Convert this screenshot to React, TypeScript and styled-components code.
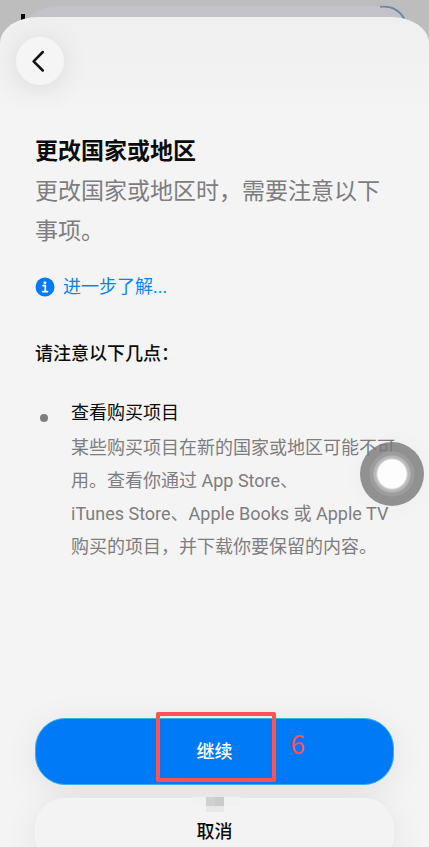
import React from "react";
import styled, { createGlobalStyle } from "styled-components";

const GlobalStyle = createGlobalStyle`
  *, *::before, *::after { box-sizing: border-box; }
  body {
    margin: 0;
    background: #bdbdbd;
    font-family: Roboto, "Noto Sans CJK SC", sans-serif;
  }
  h1, h2, h3, p, ul { margin: 0; padding: 0; }
  button { border: 0; padding: 0; font: inherit; cursor: pointer; }
`;

const Screen = styled.div`
  position: relative;
  display: flex;
  flex-direction: column;
  height: 100vh;
  overflow: hidden;
  padding-top: 17px;
`;

const Backdrop = styled.div`
  position: absolute;
  top: 6px;
  left: 20px;
  right: 20px;
  height: 60px;
  border-radius: 36px 30px 0 0;
  background: #c3c2c8;
`;

const BackdropText = styled.span`
  position: absolute;
  top: 14px;
  left: 21px;
  width: 4px;
  height: 8px;
  background: #000;
`;

const BackdropArc = styled.svg`
  position: absolute;
  top: 5px;
  right: 22px;
`;

const Sheet = styled.main`
  position: relative;
  flex: 1;
  display: flex;
  flex-direction: column;
  border-radius: 38px 38px 0 0 / 26px 26px 0 0;
  background: linear-gradient(#efefef, #f4f4f4 100px);
`;

const BackButton = styled.button`
  display: grid;
  place-items: center;
  width: 48px;
  height: 48px;
  margin: 20px 0 0 16px;
  border-radius: 50%;
  background: #f5f5f5;
  color: #111;
  box-shadow: 0 4px 28px rgba(0, 0, 0, 0.1);
`;

const Content = styled.div`
  padding: 47px 32px 0 35px;
`;

const Title = styled.h1`
  font-size: 23px;
  line-height: 40px;
  font-weight: 700;
  color: #0c0c0c;
`;

const Lead = styled.p`
  font-size: 23px;
  line-height: 40px;
  color: #7d7d7f;
`;

const LearnMore = styled.a`
  display: inline-flex;
  align-items: center;
  gap: 8px;
  margin-top: 17px;
  font-size: 18px;
  line-height: 36px;
  color: #0a84e6;
  text-decoration: none;
`;

const SectionTitle = styled.h2`
  margin-top: 31px;
  font-size: 18px;
  line-height: 36px;
  font-weight: 500;
  color: #0c0c0c;
`;

const NoteList = styled.ul`
  margin-top: 24px;
  list-style: none;
`;

const Note = styled.li`
  display: flex;
  gap: 23px;

  &::before {
    content: "";
    flex: none;
    width: 8px;
    height: 8px;
    margin: 18px 0 0 5px;
    border-radius: 50%;
    background: #7d7d7f;
  }
`;

const NoteTitle = styled.h3`
  font-size: 18px;
  line-height: 33px;
  font-weight: 400;
  color: #0c0c0c;
`;

const NoteText = styled.p`
  margin-top: 2px;
  font-size: 18px;
  line-height: 33px;
  color: #7d7d7f;
`;

const Actions = styled.div`
  display: flex;
  flex-direction: column;
  gap: 13px;
  margin: auto 35px -18px;
`;

const ActionButton = styled.button<{ $primary?: boolean }>`
  position: relative;
  height: 67px;
  border-radius: 30px;
  font-size: 18px;
  line-height: 24px;
  font-weight: 500;
  color: ${(p) => (p.$primary ? "#fff" : "#0c0c0c")};
  background: ${(p) => (p.$primary ? "#007af7" : "#f3f3f3")};
  border: 1px solid ${(p) => (p.$primary ? "#35b2e6" : "#f5f5f5")};
  box-shadow: 0 6px 34px rgba(0, 0, 0, 0.08);
`;

const Highlight = styled.span`
  position: absolute;
  top: -7px;
  left: 50%;
  width: 120px;
  height: 70px;
  margin-left: -59px;
  border: 4px solid #ff5353;
  border-radius: 2px;
`;

const StepNumber = styled.span`
  position: absolute;
  top: 7px;
  left: 50%;
  margin-left: 76px;
  font-family: "Noto Sans CJK SC", sans-serif;
  font-size: 26px;
  line-height: 34px;
  font-weight: 400;
  color: #ff4f58;
`;

const Mosaic = styled.svg`
  position: absolute;
  top: -2px;
  left: 50%;
  margin-left: -22px;
`;

const TouchButton = styled.button`
  position: absolute;
  top: 442px;
  right: 5px;
  width: 64px;
  height: 64px;
  border-radius: 50%;
  background: radial-gradient(
    circle,
    #fdfdfd 14px,
    #bcbcbc 16px,
    #b6b6b6 18px,
    #9e9e9e 19px,
    #9c9c9c 22px,
    rgba(120, 120, 120, 0.8) 23px
  );
  box-shadow: 0 0 24px rgba(0, 0, 0, 0.03);
`;

const ChevronIcon = () => (
  <svg width="24" height="24" viewBox="0 0 24 24" fill="none" aria-hidden="true">
    <path
      d="M14.800 3 5.600 12.300l9.200 9.200"
      stroke="currentColor"
      strokeWidth="2.5"
      strokeLinecap="round"
      strokeLinejoin="round"
    />
  </svg>
);

const InfoIcon = () => (
  <svg width="20" height="20" viewBox="0 0 20 20" aria-hidden="true">
    <circle cx="10" cy="10" r="9.5" fill="#007af7" />
    <circle cx="9.900" cy="5.8" r="1.5" fill="#fff" />
    <path
      d="M8 8.700h2.300v5.700M7.700 14.600h4.900"
      fill="none"
      stroke="#fff"
      strokeWidth="1.700"
      strokeLinecap="round"
      strokeLinejoin="round"
    />
  </svg>
);

export default function App() {
  return (
    <>
      <GlobalStyle />
      <Screen>
        <Backdrop />
        <BackdropText />
        <BackdropArc width="28" height="16" viewBox="0 0 28 16" fill="none" aria-hidden="true">
          <path d="M1 1.8C12 .5 20 4 25.5 14" stroke="#7186a6" strokeWidth="1.8" />
        </BackdropArc>
        <Sheet>
          <BackButton type="button" aria-label="返回">
            <ChevronIcon />
          </BackButton>
          <Content>
            <Title>更改国家或地区</Title>
            <Lead>更改国家或地区时，需要注意以下事项。</Lead>
            <LearnMore href="#">
              <InfoIcon />
              进一步了解...
            </LearnMore>
            <SectionTitle>请注意以下几点：</SectionTitle>
            <NoteList>
              <Note>
                <div>
                  <NoteTitle>查看购买项目</NoteTitle>
                  <NoteText>
                    某些购买项目在新的国家或地区可能不可用。查看你通过 App Store、iTunes&nbsp;Store、Apple
                    Books 或 Apple TV 购买的项目，并下载你要保留的内容。
                  </NoteText>
                </div>
              </Note>
            </NoteList>
          </Content>
          <Actions>
            <ActionButton type="button" $primary>
              继续
              <Highlight />
              <StepNumber>6</StepNumber>
            </ActionButton>
            <ActionButton type="button">
              取消
              <Mosaic width="48" height="16" viewBox="0 0 48 16" aria-hidden="true">
                <path d="M0 0h48v9H0z" fill="#f1f1f1" />
                <path d="M13 0h9v9h-9z" fill="#d1d1d1" />
                <path d="M22 0h9v9h-9z" fill="#cbcbcb" />
                <path d="M13 9h18v6H13z" fill="#e8e8e8" />
              </Mosaic>
            </ActionButton>
          </Actions>
        </Sheet>
        <TouchButton type="button" aria-label="辅助触控" />
      </Screen>
    </>
  );
}
